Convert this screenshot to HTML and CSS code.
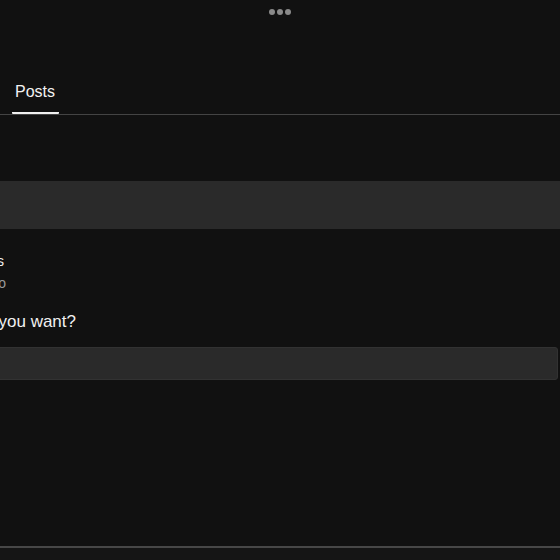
FILE: index.html
```html
<!DOCTYPE html>
<html lang="en">
<head>
<meta charset="utf-8">
<title>Posts</title>
<link rel="stylesheet" href="styles.css">
</head>
<body>
<div class="page">
  <header class="topbar">
    <span class="dot"></span><span class="dot"></span><span class="dot"></span>
  </header>
  <nav class="tabs">
    <div class="tab active">Posts</div>
  </nav>
  <main class="main">
    <div class="band"></div>
    <div class="meta">
      <div class="meta-name">Alexis</div>
      <div class="meta-time">2 hours ago</div>
    </div>
    <div class="question">What do you want?</div>
    <div class="input"></div>
  </main>
  <footer class="footer"></footer>
</div>
</body>
</html>
```
FILE: styles.css
```css
html, body {
  margin: 0;
  padding: 0;
  background: #111111;
  height: 560px;
  overflow: hidden;
}
.page {
  height: 560px;
  display: flex;
  flex-direction: column;
  font-family: "Liberation Sans", Arial, sans-serif;
  color: #f2f2f2;
  overflow: hidden;
}
.topbar {
  height: 24px;
  display: flex;
  align-items: center;
  justify-content: center;
  gap: 2px;
}
.dot {
  width: 6px;
  height: 6px;
  border-radius: 50%;
  background: #8a8a8a;
}
.tabs {
  padding: 58px 0 0 12px;
  border-bottom: 1px solid #444444;
  display: flex;
}
.tab {
  font-size: 16px;
  line-height: 20px;
  padding: 0 4px 10px 3px;
  width: 40px;
  border-bottom: 2px solid transparent;
}
.tab.active {
  border-bottom-color: #f0f0f0;
  border-radius: 1px;
}
.main {
  flex: 1;
  display: flex;
  flex-direction: column;
}
.band {
  margin-top: 66px;
  height: 48px;
  background: #2a2a2a;
}
.meta {
  margin-top: 22px;
  width: 160px;
  margin-left: -156px;
  text-align: right;
  display: flex;
  flex-direction: column;
  gap: 2px;
}
.meta-name {
  font-size: 14px;
  line-height: 20px;
  color: #eeeeee;
}
.meta-time {
  font-size: 14px;
  line-height: 20px;
  color: #9a9a9a;
  margin-right: -2px;
}
.question {
  margin-top: 17px;
  width: 200px;
  margin-left: -124px;
  text-align: right;
  font-size: 17px;
  line-height: 24px;
  color: #f0f0f0;
}
.input {
  margin: 13px 2px 0 -10px;
  height: 31px;
  background: #2a2a2a;
  border: 1px solid #323232;
  border-radius: 3px;
}
.footer {
  height: 12px;
  border-top: 2px solid #474747;
  background: #151515;
}
```
